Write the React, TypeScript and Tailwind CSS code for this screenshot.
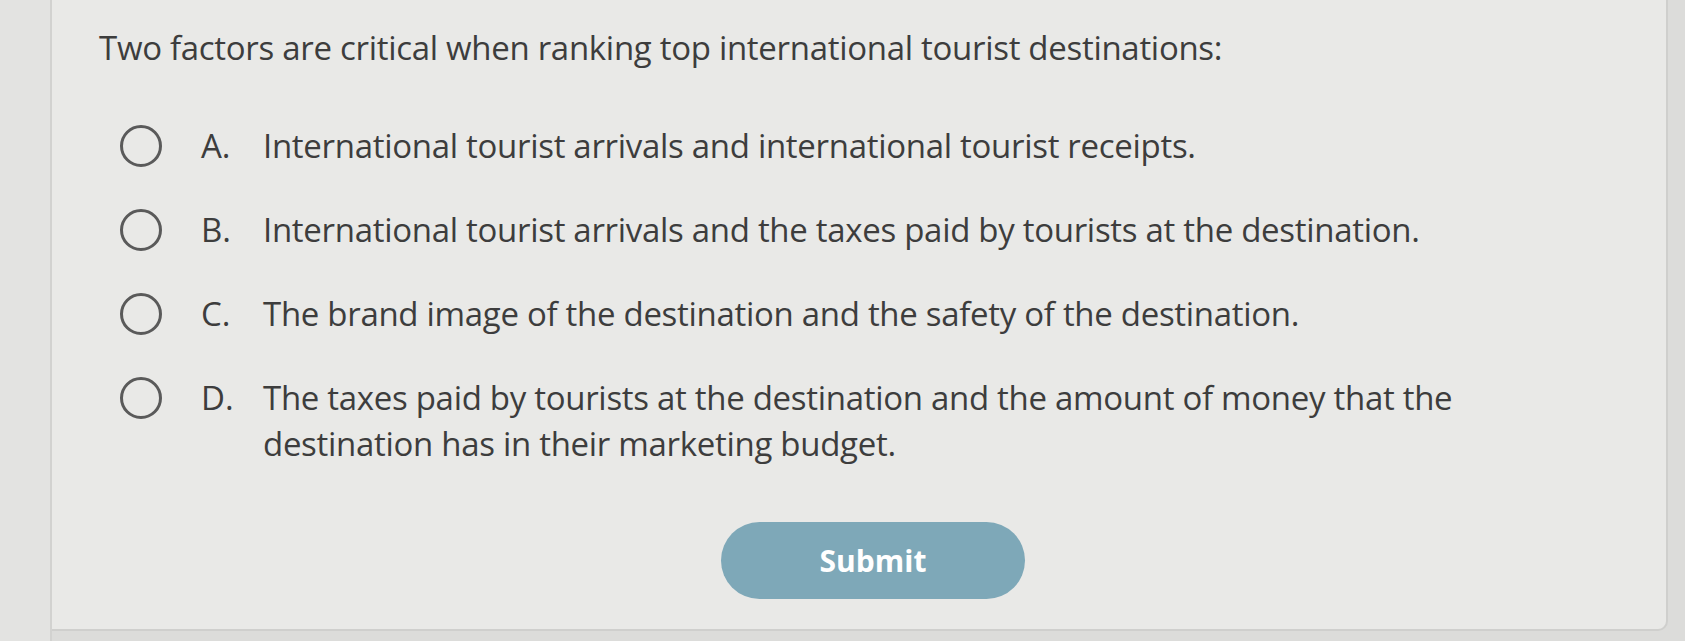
import React from "react";

const options = [
  { letter: "A.", text: "International tourist arrivals and international tourist receipts." },
  { letter: "B.", text: "International tourist arrivals and the taxes paid by tourists at the destination." },
  { letter: "C.", text: "The brand image of the destination and the safety of the destination." },
  {
    letter: "D.",
    text: "The taxes paid by tourists at the destination and the amount of money that the destination has in their marketing budget.",
  },
];

export default function App() {
  return (
    <div
      className="flex w-[1685px] h-[641px] overflow-hidden bg-[#dcdcda] text-[#3d3d3d]"
      style={{ fontFamily: '"Open Sans", "Noto Sans", sans-serif' }}
    >
      <div className="w-[52px] shrink-0 bg-[#e3e3e1] border-r-2 border-[#d2d2d0]" />
      <div className="flex flex-col w-[1616px] h-[631px] shrink-0 bg-[#e9e9e7] border-r-2 border-b-2 border-[#cfcfcd] rounded-br-[10px] pl-[47px] pt-[26px]">
        <p className="text-[33px] leading-[44px] tracking-[-0.3px]">
          Two factors are critical when ranking top international tourist destinations:
        </p>
        <div className="flex flex-col mt-[53px] gap-[38px] pl-[21px]">
          {options.map((o) => (
            <div key={o.letter} className="flex items-start">
              <div className="w-[42px] h-[42px] mt-[2px] shrink-0 rounded-full border-[3px] border-[#5a5a5a]" />
              <span className="w-[62px] ml-[39px] shrink-0 text-[33px] leading-[46px]">{o.letter}</span>
              <span className="w-[1210px] text-[33px] leading-[46px] tracking-[-0.3px]">{o.text}</span>
            </div>
          ))}
        </div>
        <div className="flex justify-center w-[1548px] mt-[55px]">
          <button className="w-[304px] h-[77px] rounded-full bg-[#7ea8b8] text-white text-[30px] font-bold">
            Submit
          </button>
        </div>
      </div>
    </div>
  );
}
